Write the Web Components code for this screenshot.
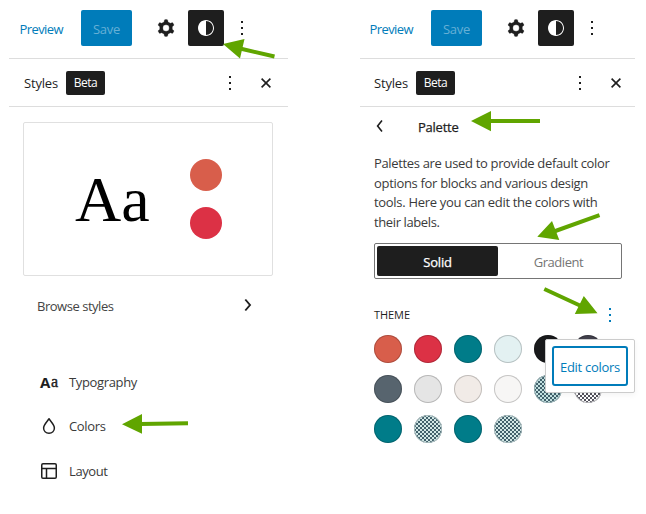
<!DOCTYPE html>
<html lang="en">
<head>
<meta charset="utf-8">
<title>Styles</title>
<style>
html,body{margin:0;background:#fff}
body{width:646px;height:514px;overflow:hidden;font-family:"Open Sans","Noto Sans",sans-serif;font-size:13px;color:#1e1e1e}
</style>
</head>
<body>
<style-guide></style-guide>
<script>
const define = (name, html, setup) => {
  const t = document.createElement('template');
  t.innerHTML = html;
  customElements.define(name, class extends HTMLElement {
    constructor() { super(); this.attachShadow({mode:'open'}).append(t.content.cloneNode(true)); }
    connectedCallback() { if (setup) setup(this, this.shadowRoot); }
  });
};

// Text label whose tracking is adjusted to fill the width given in "w".
define('ui-text', `<style>:host{display:inline-block;white-space:nowrap;line-height:20px}span{display:inline-block}</style><span><slot></slot></span>`,
(el, root) => {
  const s = root.querySelector('span'), w = +el.getAttribute('w');
  const n = s.getBoundingClientRect().width;
  s.style.letterSpacing = ((w - n) / el.textContent.length).toFixed(3) + 'px';
  el.style.width = w + 'px';
});

const icons = {
  gear: ['0.6 0.7 22.6 22.6', '<path fill="currentColor" stroke="currentColor" stroke-width=".2" fill-rule="evenodd" d="M10.289 4.836A1 1 0 0111.275 4h1.306a1 1 0 01.987.836l.244 1.466c.787.26 1.503.679 2.108 1.218l1.393-.522a1 1 0 011.216.437l.653 1.13a1 1 0 01-.23 1.273l-1.148.944a6.025 6.025 0 010 2.435l1.149.946a1 1 0 01.23 1.272l-.653 1.13a1 1 0 01-1.216.437l-1.394-.522c-.605.54-1.32.958-2.108 1.218l-.244 1.466a1 1 0 01-.987.836h-1.306a1 1 0 01-.986-.836l-.244-1.466a5.995 5.995 0 01-2.108-1.218l-1.394.522a1 1 0 01-1.217-.436l-.653-1.131a1 1 0 01.23-1.272l1.149-.946a6.026 6.026 0 010-2.435l-1.148-.944a1 1 0 01-.23-1.272l.653-1.131a1 1 0 011.217-.437l1.393.522a5.994 5.994 0 012.108-1.218l.244-1.466zM14.929 12a3 3 0 11-6 0 3 3 0 016 0z"/>'],
  contrast: ['0 0 24 24', '<path fill="currentColor" d="M12 4c-4.4 0-8 3.6-8 8s3.600 8 8 8 8-3.600 8-8-3.600-8-8-8zm0 15c-.1 0-.1 0 0 0V5c3.900 0 7 3.100 7 7s-3.100 7-7 7z"/>'],
  dots: ['0 0 24 24', '<path fill="currentColor" d="M11 17h2v2h-2zm0-6h2v2h-2zm0-6h2v2h-2z"/>'],
  close: ['0 0 24 24', '<path fill="none" stroke="currentColor" stroke-width="1.6" d="M7.6 7.600l8.800 8.800M16.400 7.600l-8.800 8.800"/>'],
  right: ['0 0 24 24', '<path fill="none" stroke="currentColor" stroke-width="1.9" d="M8.300 6.500L13 12l-4.700 5.500"/>'],
  left: ['0 0 24 24', '<path fill="none" stroke="currentColor" stroke-width="1.600" d="M15 6.600L10.600 12l4.400 5.400"/>'],
  drop: ['0 0 24 24', '<path fill="none" stroke="currentColor" stroke-width="1.500" stroke-linejoin="round" d="M12 4.800C10.400 7.100 6.600 10.800 6.600 14c0 2.900 2.300 5.200 5.400 5.200s5.400-2.300 5.400-5.200C17.400 10.800 13.600 7.100 12 4.800z"/>'],
  layout: ['0 0 24 24', '<path fill="none" stroke="currentColor" stroke-width="1.500" d="M6 4.750h12q1.250 0 1.250 1.250v12q0 1.250-1.250 1.250H6q-1.250 0-1.250-1.250V6q0-1.250 1.250-1.250zM4.750 9.500h14.500M9.500 9.500v9.750"/>']
};
define('ui-icon', `<style>:host{display:block;flex:none;width:24px;height:24px}svg{display:block;width:100%;height:100%}</style><svg></svg>`,
(el, root) => {
  const [vb, d] = icons[el.getAttribute('name')], svg = root.querySelector('svg');
  svg.setAttribute('viewBox', vb); svg.innerHTML = d;
});

define('editor-toolbar', `<style>
:host{display:flex;align-items:flex-start;padding:10px 0 0 var(--inset,10.500px);box-sizing:border-box;border-bottom:1px solid #ddd;height:59px}
.preview{color:#007cba;padding-top:9px;width:61.500px}
.save{background:#007cba;color:#66b0d6;width:51px;height:36px;border-radius:2px;display:flex;align-items:center;justify-content:center;padding-top:1px;box-sizing:border-box}
.gear{margin:6px 10px 0 22px}
.tog{background:#1e1e1e;color:#fff;width:36px;height:36px;border-radius:2px;display:grid;place-items:center}
.more{margin:6px 0 0 6px}
</style><div class="preview"><ui-text w="43.500">Preview</ui-text></div><div class="save"><ui-text w="27">Save</ui-text></div><ui-icon class="gear" name="gear"></ui-icon><div class="tog"><ui-icon name="contrast"></ui-icon></div><ui-icon class="more" name="dots"></ui-icon>`);

define('styles-bar', `<style>
:host{display:flex;align-items:center;height:48px;box-sizing:border-box;border-bottom:1px solid #ddd;padding-left:var(--bar-inset,15px)}
.badge{background:#1e1e1e;color:#fff;width:39px;height:24px;border-radius:2px;margin-left:8px;display:flex;justify-content:center;align-items:center;font-size:12px}
.badge ui-text{padding-top:1px}
.dots{margin-left:113px}.close{margin-left:12px}
</style><ui-text w="34">Styles</ui-text><div class="badge"><ui-text w="23.500">Beta</ui-text></div><ui-icon class="dots" name="dots"></ui-icon><ui-icon class="close" name="close"></ui-icon>`);

define('style-preview', `<style>
:host{display:flex;box-sizing:border-box;width:250px;height:154px;margin:15px 0 0 14px;border:1px solid #e0e0e0;border-radius:2px;padding-left:51px}
.aa{font:64px/72px "Liberation Serif",serif;color:#000;width:115px;margin-top:41px}
.sw{padding-top:36px;display:grid;gap:16px;align-content:start}
i{display:block;width:32px;height:32px;border-radius:50%;background:#d85e4b}i+i{background:#dc3145}
</style><div class="aa">Aa</div><div class="sw"><i></i><i></i></div>`);

define('nav-row', `<style>
:host{display:flex;align-items:center;height:44.300px;color:#3a3a3a}
::slotted(ui-icon){margin-right:8px;color:#1e1e1e}
</style><slot></slot>`);

define('type-icon', `<style>:host{display:flex;width:32px;height:24px;line-height:24px;color:#1e1e1e}
b{font:700 15px/24px "Open Sans",sans-serif;width:11px;margin-left:3px;letter-spacing:-.5px}span{font:400 16px/24px "Liberation Serif",serif;-webkit-text-stroke:.4px #1e1e1e}</style><b>A</b><span>a</span>`);

define('styles-root', `<style>
:host{display:block;width:279px}
.browse{display:flex;justify-content:space-between;align-items:center;width:224px;height:24px;margin:17px 0 0 28px;color:#444}
.browse ui-icon{color:#1e1e1e}
nav{margin:43px 0 0 28px}
</style><editor-toolbar></editor-toolbar><styles-bar></styles-bar><style-preview></style-preview>
<div class="browse"><ui-text w="76.500" style="margin-top:1px">Browse styles</ui-text><ui-icon name="right" style="margin-top:-1px"></ui-icon></div>
<nav><nav-row><type-icon></type-icon><ui-text w="68">Typography</ui-text></nav-row>
<nav-row><ui-icon name="drop"></ui-icon><ui-text w="36.500">Colors</ui-text></nav-row>
<nav-row><ui-icon name="layout"></ui-icon><ui-text w="38.500">Layout</ui-text></nav-row></nav>`);

define('color-dot', `<style>
:host{display:block;width:28px;height:28px;border-radius:50%;box-sizing:border-box;background:var(--c);box-shadow:inset 0 0 0 1px rgba(0,0,0,.2)}
:host([duo]){background:repeating-conic-gradient(var(--a) 0 25%,var(--b) 0 50%) 0 0/4px 4px;box-shadow:inset 0 0 0 1px var(--ring)}
</style>`, el => {
  const c = el.getAttribute('c'), duo = el.getAttribute('duo');
  if (c) el.style.setProperty('--c', c);
  if (duo) { const [a, b, r] = duo.split(' '); el.style.setProperty('--a', a); el.style.setProperty('--b', b); el.style.setProperty('--ring', r); }
});

define('mode-toggle', `<style>
:host{display:grid;grid-template-columns:121px 1fr;box-sizing:border-box;width:248px;height:36px;border:1px solid #757575;border-radius:2px;padding:2px;margin-left:14px}
div{display:flex;align-items:center;justify-content:center;color:#757575;padding-top:1px}
.on{background:#1e1e1e;color:#fff;border-radius:2px;-webkit-text-stroke:.25px #fff}
</style><div class="on"><ui-text w="28.500">Solid</ui-text></div><div><ui-text w="49.500">Gradient</ui-text></div>`);

define('edit-popover', `<style>
:host{position:absolute;left:171px;top:4px;display:block;box-sizing:border-box;width:90px;height:54px;padding:6px;background:#fff;border:1px solid #ccc;border-radius:2px;box-shadow:0 2px 6px rgba(0,0,0,.05)}
div{height:40px;width:76px;box-sizing:border-box;border:2px solid #007cba;border-radius:3px;color:#007cba;display:flex;align-items:center;justify-content:center;padding-top:2px}
</style><div><ui-text w="60">Edit colors</ui-text></div>`);

define('palette-panel', `<style>
:host{display:block;width:275px;--inset:9.500px;--bar-inset:14px}
.title{display:flex;align-items:center;height:24px;margin:7px 0 0 7px}
.title ui-text{margin-left:27px;-webkit-text-stroke:.25px #1e1e1e;margin-top:1px}
.copy{margin:15px 0 0 14px;height:90px;color:#3a3a3a;display:grid;grid-auto-rows:19.600px;align-content:start}
.theme{display:flex;justify-content:space-between;align-items:center;width:248px;height:24px;margin:24px 0 0 14px;font-size:11px}
.theme ui-icon{color:#007cba}
.grid{position:relative;display:grid;grid-template-columns:repeat(6,28px);gap:12px;margin:8px 0 0 14px}
</style><editor-toolbar></editor-toolbar><styles-bar></styles-bar>
<div class="title"><ui-icon name="left"></ui-icon><ui-text w="40.500">Palette</ui-text></div>
<div class="copy"><ui-text w="235.500">Palettes are used to provide default color</ui-text><ui-text w="214">options for blocks and various design</ui-text><ui-text w="223.500">tools. Here you can edit the colors with</ui-text><ui-text w="65.500">their labels.</ui-text></div>
<mode-toggle></mode-toggle>
<div class="theme"><ui-text w="36">THEME</ui-text><ui-icon name="dots"></ui-icon></div>
<div class="grid">
<color-dot c="#d85e4b"></color-dot><color-dot c="#dc3145"></color-dot><color-dot c="#007c89"></color-dot><color-dot c="#e3f1f2"></color-dot><color-dot c="#191a1c"></color-dot><color-dot c="#42414c"></color-dot>
<color-dot c="#57646e"></color-dot><color-dot c="#e5e5e5"></color-dot><color-dot c="#f1ebe7"></color-dot><color-dot c="#f7f6f5"></color-dot><color-dot duo="#42616c #c4e2e1 #93acb0"></color-dot><color-dot duo="#53525c #ffffff #b5b5b8"></color-dot>
<color-dot c="#007c89"></color-dot><color-dot duo="#42616c #d2e8e6 #a6b9bb"></color-dot><color-dot c="#007c89"></color-dot><color-dot duo="#42616c #d2e8e6 #a6b9bb"></color-dot>
<edit-popover></edit-popover></div>`);

// Green callout arrows drawn over the two panels.
define('callout-arrows', `<style>:host{position:absolute;inset:0;width:646px;height:514px;pointer-events:none}svg{display:block}</style>
<svg width="646" height="514" viewBox="0 0 646 514" fill="#60a500" stroke="#60a500"><g stroke-width="4"><path d="M274.500 56.500L240 48.500M188 423.300L140 424M540 121H490M599.500 215.200L554 231.500M544.300 289L581 306"/></g><g stroke="none"><path d="M223 44L244.500 39 240 58.500zM122 424.300L142 414V433.700zM471 121L491 111V131.300zM537.300 236.800L552 221 559.300 240zM597.500 313.300L583.800 296 574.800 314z"/></g></svg>`);

define('style-guide', `<style>:host{display:flex;position:relative;width:646px;height:514px;padding-left:9px;gap:72px;box-sizing:border-box}</style>
<styles-root></styles-root><palette-panel></palette-panel><callout-arrows></callout-arrows>`);
</script>
</body>
</html>
